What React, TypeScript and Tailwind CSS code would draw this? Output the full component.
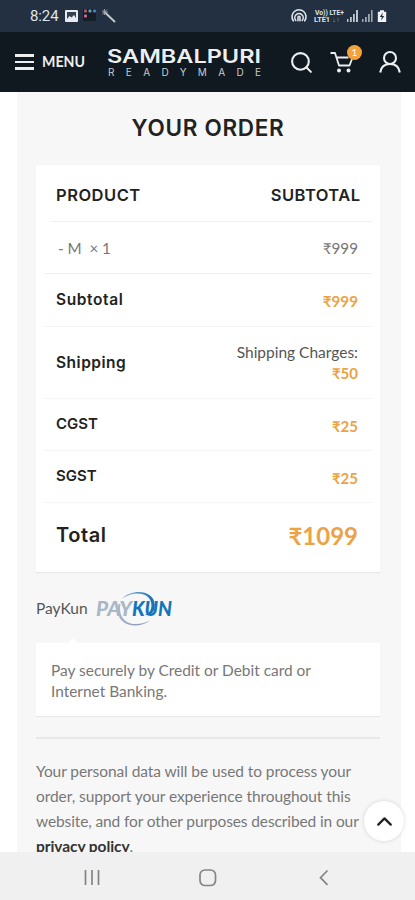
import { ChevronUp, Search } from 'lucide-react';

const charges = [
  { label: 'CGST', value: '₹25' },
  { label: 'SGST', value: '₹25' },
];

const StatusBar = () => (
  <div className="relative h-8 shrink-0 bg-[#233041] text-[#dfe4ea]">
    <span className="absolute left-[30px] top-[6px] font-['Roboto',sans-serif] text-[15px] leading-5 tracking-[-0.1px]">
      8:24
    </span>
    <svg className="absolute left-0 top-0" width="415" height="32" viewBox="0 0 415 32" fill="none">
      {/* picture */}
      <rect x="65" y="10" width="13" height="12" rx="1" fill="#e8ecf0" />
      <rect x="67" y="12" width="9" height="7" fill="#334155" />
      <path d="M67 19l2.500-3 2 1.500 2.500-2.500 2 3v2h-9z" fill="#e8ecf0" />
      {/* app dots */}
      <rect x="83" y="9" width="13" height="12" fill="#151d29" />
      <rect x="84" y="9.5" width="3" height="3" rx="1" fill="#b6596f" />
      <rect x="88.5" y="9.5" width="3" height="3" rx="1" fill="#5fa5ac" />
      <rect x="93" y="9.5" width="3" height="3" rx="1" fill="#4d82c9" />
      <rect x="84" y="14.5" width="3" height="3" rx="1" fill="#d66b92" />
      {/* wand */}
      <path d="M105 12.5l10 9.5" stroke="#c7cdd4" strokeWidth="1.8" />
      <path d="M102 12h6M104.5 9v6M102.5 10l4 4M107 9.5l-4.5 5" stroke="#a8b0ba" strokeWidth=".8" />
      {/* hotspot */}
      <g stroke="#dfe4ea" strokeWidth="1.6" strokeLinecap="round">
        <path d="M293.3 20.800a7 7 0 1 1 11.400 0" />
        <path d="M295.800 20.500a4.200 4.200 0 1 1 6.400 0" />
        <path d="M298 20.800v-3.500a1 1 0 0 1 2 0v3.500" />
      </g>
      <g fill="#dfe4ea" fontFamily="Roboto, sans-serif" fontSize="6.500" fontWeight="700">
        <text x="315" y="14.800" textLength="29" lengthAdjust="spacingAndGlyphs">Vo)) LTE+</text>
        <text x="314" y="21.800" textLength="16" lengthAdjust="spacingAndGlyphs">LTE1</text>
        <text x="332" y="21.800" textLength="8" lengthAdjust="spacingAndGlyphs" fill="#8f9aa8">↓↑</text>
      </g>
      <g fill="#bcc4cd">
        <path d="M347 19h1.500v3H347zM350 17h1.800v5H350zM353 14h1.800v8H353zM356 10h2v12h-2z" />
        <path d="M362 19h1.500v3H362zM365 17h1.800v5H365zM368 14h1.800v8H368zM371 10h1.600v12H371z" opacity=".8" />
      </g>
      <path d="M380 10.200h4v1.600h2.200V22h-8.400V11.800h2.200z" fill="#f1f3f5" />
      <path d="M382.800 12.500l-3 4.500h2l-.6 3.500 3-4.500h-2z" fill="#233041" />
    </svg>
  </div>
);

const Header = () => (
  <header className="flex h-[60px] shrink-0 items-center bg-[#101820] pl-[15px] pr-[14px] text-[#eceff1]">
    <div className="flex w-[19px] shrink-0 flex-col gap-[4px]">
      <span className="h-[2.5px] bg-current" />
      <span className="h-[2.5px] bg-current" />
      <span className="h-[2.5px] bg-current" />
    </div>
    <svg className="ml-2 shrink-0" width="44" height="20" fill="currentColor">
      <text x="0" y="14.500" fontFamily="Lato, sans-serif" fontSize="14.500" fontWeight="700" textLength="43" lengthAdjust="spacingAndGlyphs">MENU</text>
    </svg>
    <svg className="ml-[21px] shrink-0" width="156" height="36" viewBox="0 0 156 36" fill="currentColor">
      <text x="0" y="19" fontFamily="Inter, sans-serif" fontSize="18.500" fontWeight="600" textLength="154" lengthAdjust="spacingAndGlyphs">SAMBALPURI</text>
      <text x="1" y="31.500" fontFamily="Inter, sans-serif" fontSize="10" fill="#c8ccd0" textLength="153">READYMADE</text>
    </svg>
    <Search className="ml-[26px] shrink-0" size={25} strokeWidth={2} />
    <div className="relative ml-[16px] shrink-0">
      <svg width="25" height="24" viewBox="0 0 25 24" fill="none" stroke="currentColor" strokeWidth="1.800">
        <path d="M.500 3h4.500l4 12.500h10.500l2.500-6.500M6.500 7.500h12" strokeLinejoin="round" />
        <circle cx="9" cy="20.500" r="1.100" fill="currentColor" />
        <circle cx="18.500" cy="20.500" r="1.100" fill="currentColor" />
      </svg>
      <span className="absolute left-[17px] top-[-5px] flex size-[15px] items-center justify-center rounded-full bg-[#f4a23c] font-['Lato',sans-serif] text-[10px] text-white">
        1
      </span>
    </div>
    <svg className="ml-auto shrink-0" width="22" height="24" viewBox="0 0 22 24" fill="none" stroke="currentColor" strokeWidth="2.100">
      <circle cx="11" cy="8" r="6" />
      <path d="M1.200 22.500c.8-5.500 4.200-8.500 9.800-8.500s9 3 9.800 8.500" />
    </svg>
  </header>
);

const OrderTable = () => (
  <div className="mt-[25px] h-[407px] bg-white px-2 shadow-[0_1px_1px_rgba(0,0,0,0.06)]">
    <div className="ml-[6px] flex h-[57px] items-center justify-between border-b border-[#f0f0f0] pl-[6px] pr-3 pt-[5px] font-['Inter',sans-serif] text-[16.500px] font-semibold">
      <span className="tracking-[0.5px]">PRODUCT</span>
      <span className="mr-[-0.5px] tracking-[0.45px]">SUBTOTAL</span>
    </div>
    <div className="flex h-[52px] items-center justify-between border-b border-[#f0f0f0] pl-[14px] pr-[14px] pt-[2px] text-[15.2px] text-[#777]">
      <span>- M&nbsp; × 1</span>
      <span>₹999</span>
    </div>
    <div className="flex h-[53px] items-center justify-between border-b border-[#f3f3f3] pl-3 pr-[14px]">
      <span className="font-['Inter',sans-serif] text-[15.5px] font-semibold tracking-[0.6px]">Subtotal</span>
      <span className="pt-[2px] text-[15.2px] font-bold text-[#eba345]">₹999</span>
    </div>
    <div className="flex h-[72px] items-center justify-between border-b border-[#f5f5f5] pl-3 pr-[14px]">
      <span className="font-['Inter',sans-serif] text-[15.5px] font-semibold tracking-[0.5px]">Shipping</span>
      <div className="pt-px text-right text-[15.5px] leading-[21px] text-[#555]">
        Shipping Charges:
        <div className="text-[15px] font-bold text-[#eba345]">₹50</div>
      </div>
    </div>
    {charges.map((row) => (
      <div key={row.label} className="flex h-[52px] items-center justify-between border-b border-[#f5f5f5] pl-3 pr-[14px]">
        <span className="font-['Inter',sans-serif] text-[15px] font-semibold">{row.label}</span>
        <span className="pt-[3px] text-[15px] font-bold text-[#eba345]">{row.value}</span>
      </div>
    ))}
    <div className="flex h-[66px] items-center justify-between pl-3 pr-[14px]">
      <span className="-mt-[2px] font-['Inter',sans-serif] text-[20px] font-semibold tracking-[0.6px]">Total</span>
      <span className="text-[24px] font-bold text-[#eba345]">₹1099</span>
    </div>
  </div>
);

const PaykunLogo = () => (
  <svg width="80" height="38" viewBox="0 0 80 38" fill="none">
    <defs>
      <linearGradient id="upper" x1="26" y1="8" x2="54" y2="16" gradientUnits="userSpaceOnUse">
        <stop stopColor="#8db3d6" />
        <stop offset="1" stopColor="#1475b9" />
      </linearGradient>
      <linearGradient id="lower" x1="24" y1="18" x2="52" y2="34" gradientUnits="userSpaceOnUse">
        <stop stopColor="#a9b6cb" />
        <stop offset="1" stopColor="#8a98b0" />
      </linearGradient>
    </defs>
    <g fontFamily="Lato, sans-serif" fontSize="20.500" fontStyle="italic">
      <text x="0" y="25.500" fontWeight="900" fill="#a9b7c7" textLength="36" lengthAdjust="spacingAndGlyphs">PAY</text>
      <text x="36" y="25.500" fontWeight="900" fill="#1475b9" textLength="40" lengthAdjust="spacingAndGlyphs">KUN</text>
    </g>
    <path d="M26 8.500C35-.5 54-.5 58 11c2 6.500-.5 12.500-5 14-1.500.4-3 .2-4-.500 5-1 7.500-6.500 6-12.500C52 1.500 37 1 26 8.500z" fill="url(#upper)" />
    <path d="M24.500 14c-3.500 18 13 25 29.500 16.500C40 41 17 35 22.500 14z" fill="url(#lower)" />
  </svg>
);

const NavBar = () => (
  <nav className="h-12 shrink-0 bg-[#f0f0f0] text-[#858585]">
    <svg width="415" height="48" fill="none" stroke="currentColor" strokeWidth="1.700">
      <path d="M85.500 18v15M92 18v15M98.500 18v15" />
      <rect x="200" y="18" width="15.500" height="15.500" rx="5" />
      <path d="M327.500 18.500l-7 7.200 7 7.200" />
    </svg>
  </nav>
);

export default function App() {
  return (
    <div className="flex h-[900px] w-[415px] flex-col overflow-hidden bg-white font-['Lato',sans-serif] text-[#222]">
      <StatusBar />
      <Header />
      <main className="relative min-h-0 flex-1 overflow-hidden">
        <div className="ml-[17px] mr-[14px] h-full bg-[#f7f7f7] pl-[19px] pr-[21px] pt-[20px]">
          <h1 className="h-[28px] text-center font-['Inter',sans-serif] text-[22.500px] font-semibold leading-[31px] tracking-[0.7px]">
            YOUR ORDER
          </h1>
          <OrderTable />
          <div className="mt-[18px] flex h-[38px] items-center text-[15.5px] text-[#555]">
            <span className="mr-[8px]">PayKun</span>
            <PaykunLogo />
          </div>
          <div className="relative mt-[15px] h-[73px] bg-white px-[15px] pt-[16.5px] text-[15.45px] leading-[21px] text-[#777] shadow-[0_1px_1px_rgba(0,0,0,0.05)]">
            <span className="absolute left-[33px] top-[-3px] size-2 rotate-45 bg-white" />
            <p className="relative">
              Pay securely by Credit or Debit card or
              <br />
              Internet Banking.
            </p>
          </div>
          <hr className="mt-[21px] border-t-2 border-[#e8e8e8]" />
          <p className="mt-[19.5px] whitespace-nowrap text-[15.5px] leading-[25px] tracking-[-0.07px] text-[#777]">
            Your personal data will be used to process your
            <br />
            order, support your experience throughout this
            <br />
            <span className="tracking-[-0.12px]">website, and for other purposes described in our</span>
            <br />
            <b className="text-[#333]">privacy policy</b>.
          </p>
        </div>
        <button className="absolute right-[11px] top-[709px] flex size-10 items-center justify-center rounded-full bg-white shadow-[0_0_4px_rgba(0,0,0,0.15)]">
          <ChevronUp size={25} strokeWidth={2.2} />
        </button>
      </main>
      <NavBar />
    </div>
  );
}
